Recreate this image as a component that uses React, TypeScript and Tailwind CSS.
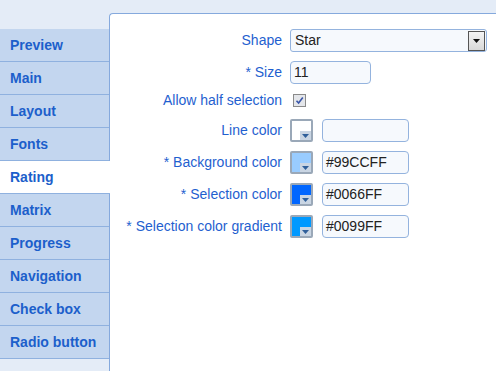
import React from "react";

const tabs = ["Preview", "Main", "Layout", "Fonts", "Rating", "Matrix", "Progress", "Navigation", "Check box", "Radio button"];

function Swatch({ color }: { color: string }) {
  return (
    <div className="relative w-[23px] h-[23px] border-2 border-[#9aa8b8] rounded-[2px]" style={{ background: color }}>
      <div className="absolute right-0 bottom-0 w-[11px] h-[9px] bg-[#c9d5e3] flex items-center justify-center">
        <svg width="7" height="4" viewBox="0 0 7 4"><path d="M0 0h7L3.5 4z" fill="#2f5f9a" /></svg>
      </div>
    </div>
  );
}

function Row({ label, children, className = "h-[23px]" }: { label: string; children: React.ReactNode; className?: string }) {
  return (
    <div className={`flex items-center ${className}`}>
      <div className="w-[180px] text-right pr-[8px] text-[#1f5fcf] whitespace-nowrap">{label}</div>
      <div className="flex items-center">{children}</div>
    </div>
  );
}

const inputCls = "h-[23px] border border-[#94b3de] rounded-[4px] bg-[#f6f9fd] px-[3px] flex items-center text-[#222]";

export default function App() {
  return (
    <div className="w-[496px] h-[371px] bg-[#e4ecf7] overflow-hidden flex text-[14px]" style={{ fontFamily: '"Liberation Sans", Arial, sans-serif' }}>
      <div className="w-[109px] pt-[29px] shrink-0">
        {tabs.map((t) => (
          <div
            key={t}
            className={`h-[33px] flex items-center pl-[10px] font-bold text-[#1c5fcb] border-b border-[#8fb1df] ${
              t === "Rating" ? "bg-white w-[110px] relative z-10" : "bg-[#c3d6ef]"
            }`}
          >
            {t}
          </div>
        ))}
      </div>
      <div className="flex-1 mt-[13px] bg-white border-l border-t border-[#85a9dd] rounded-tl-[4px] pt-[15px] flex flex-col">
        <Row label="Shape">
          <div className="w-[197px] h-[23px] border border-[#94b3de] rounded-[3px] bg-[#f6f9fd] flex items-center justify-between pl-[4px] pr-[1px] text-[#222]">
            <span>Star</span>
            <div className="w-[17px] h-[20px] border border-[#555] bg-gradient-to-b from-[#f4f4f4] to-[#d8d8d8] flex items-center justify-center">
              <svg width="7" height="4" viewBox="0 0 7 4"><path d="M0 0h7L3.5 4z" fill="#111" /></svg>
            </div>
          </div>
        </Row>
        <Row label="* Size" className="h-[22px] mt-[9px]">
          <div className={`${inputCls} w-[81px] h-[22px]`}>11</div>
        </Row>
        <Row label="Allow half selection" className="h-[13px] mt-[11px]">
          <div className="ml-[3px] w-[13px] h-[13px] border border-[#8a8a8a] bg-[#e4e6ea] flex items-center justify-center">
            <svg width="9" height="9" viewBox="0 0 9 9"><path d="M1.5 4.8 L3.6 7 L7.8 1.5" stroke="#3a56a8" strokeWidth="1.6" fill="none" /></svg>
          </div>
        </Row>
        <Row label="Line color" className="h-[23px] mt-[12px]">
          <Swatch color="#ffffff" />
          <div className={`${inputCls} w-[87px] ml-[9px]`}></div>
        </Row>
        <Row label="* Background color" className="h-[23px] mt-[9px]">
          <Swatch color="#99ccff" />
          <div className={`${inputCls} w-[87px] ml-[9px]`}>#99CCFF</div>
        </Row>
        <Row label="* Selection color" className="h-[23px] mt-[9px]">
          <Swatch color="#0066ff" />
          <div className={`${inputCls} w-[87px] ml-[9px]`}>#0066FF</div>
        </Row>
        <Row label="* Selection color gradient" className="h-[23px] mt-[9px]">
          <Swatch color="#0099ff" />
          <div className={`${inputCls} w-[87px] ml-[9px]`}>#0099FF</div>
        </Row>
      </div>
    </div>
  );
}
